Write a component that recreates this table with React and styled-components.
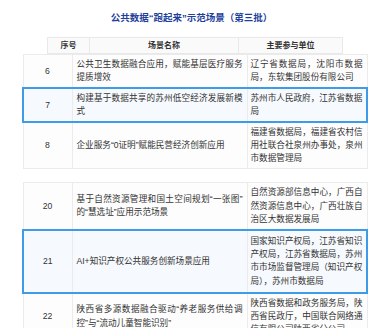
import React from 'react';
import styled, { createGlobalStyle } from 'styled-components';

const Global = createGlobalStyle`
  html, body { margin: 0; padding: 0; background: #fff; }
  body {
    font-family: "Liberation Sans", "Noto Sans CJK SC", sans-serif;
    color: #333;
  }
`;

const Page = styled.div`
  width: 386px;
  height: 328px;
  overflow: hidden;
  background: #fff;
`;

const Title = styled.h1`
  margin: 0;
  padding: 11px 3px 0 0;
  height: 26px;
  font-size: 9.5px;
  line-height: 13px;
  font-weight: 700;
  color: #1f3f9c;
  text-align: center;
`;

const HeadTable = styled.table`
  margin-left: 47px;
  width: 295px;
  border-collapse: collapse;
  table-layout: fixed;
`;

const Th = styled.th`
  height: 15px;
  padding: 0;
  border: 1px solid #e9e9e9;
  background: #fafafa;
  font-size: 8px;
  line-height: 15px;
  font-weight: 700;
  color: #333;
  text-align: center;
`;

const Table = styled.table`
  margin-left: 22px;
  margin-top: ${p => p.$gap || 0}px;
  width: 344px;
  border-collapse: collapse;
  table-layout: fixed;
`;

const Row = styled.tr`
  & > td {
    background: ${p => (p.$active ? '#f6f9fd' : '#fdfdfd')};
    ${p => p.$active && `
      border-top: 2px solid #3e9be8;
      border-bottom: 2px solid #3e9be8;
    `}
  }
  ${p => p.$active && `
    & > td:first-child { border-left: 2px solid #3e9be8; }
    & > td:last-child { border-right: 2px solid #3e9be8; }
  `}
`;

const Cell = styled.td`
  border: 1px solid #ebebeb;
  vertical-align: middle;
  font-size: 8.6px;
  line-height: 13.2px;
  padding: ${p => p.$pad ?? 3}px 4px ${p => p.$pad ?? 3}px ${p => (p.$kind === 'units' ? '3px' : '4px')};
  text-align: ${p => (p.$kind === 'no' ? 'center' : 'justify')};
  color: #333;
`;

const Line = styled.span`
  display: block;
  text-align: justify;
  text-align-last: ${p => (p.$last ? 'left' : 'justify')};
  white-space: nowrap;
`;

const Lines = ({ lines }) =>
  lines.map((l, i) => (
    <Line key={i} $last={i === lines.length - 1}>
      {l}
    </Line>
  ));

const seg1 = [
  {
    no: '6',
    name: ['公共卫生数据融合应用，赋能基层医疗服务', '提质增效'],
    units: ['辽宁省数据局，沈阳市数据', '局，东软集团股份有限公司'],
  },
  {
    no: '7',
    active: true,
    pad: 2.5,
    name: ['构建基于数据共享的苏州低空经济发展新模', '式'],
    units: ['苏州市人民政府，江苏省数据', '局'],
  },
  {
    no: '8',
    name: ['企业服务“0证明”赋能民营经济创新应用'],
    units: ['福建省数据局，福建省农村信', '用社联合社泉州办事处，泉州', '市数据管理局'],
  },
];

const seg2 = [
  {
    no: '20',
    name: ['基于自然资源管理和国土空间规划“一张图”', '的“慧选址”应用示范场景'],
    units: ['自然资源部信息中心，广西自', '然资源信息中心，广西壮族自', '治区大数据发展局'],
  },
  {
    no: '21',
    active: true,
    pad: 4,
    name: ['AI+知识产权公共服务创新场景应用'],
    units: ['国家知识产权局，江苏省知识', '产权局，江苏省数据局，苏州', '市市场监督管理局（知识产权', '局），苏州市数据局'],
  },
  {
    no: '22',
    name: ['陕西省多源数据融合驱动“养老服务供给调', '控”与“流动儿童智能识别”'],
    units: ['陕西省数据和政务服务局，陕', '西省民政厅，中国联合网络通', '信有限公司陕西省分公司'],
  },
];

const Segment = ({ rows, gap }) => (
  <Table $gap={gap}>
    <colgroup>
      <col style={{ width: 49 }} />
      <col style={{ width: 175 }} />
      <col style={{ width: 120 }} />
    </colgroup>
    <tbody>
      {rows.map(r => (
        <Row key={r.no} $active={r.active}>
          <Cell $kind="no" $pad={r.pad}>{r.no}</Cell>
          <Cell $kind="name" $pad={r.pad}>
            <Lines lines={r.name} />
          </Cell>
          <Cell $kind="units" $pad={r.pad}>
            <Lines lines={r.units} />
          </Cell>
        </Row>
      ))}
    </tbody>
  </Table>
);

export default function App() {
  return (
    <Page>
      <Global />
      <Title>公共数据“跑起来”示范场景（第三批）</Title>
      <HeadTable>
        <colgroup>
          <col style={{ width: 42 }} />
          <col style={{ width: 149 }} />
          <col style={{ width: 104 }} />
        </colgroup>
        <thead>
          <tr>
            <Th>序号</Th>
            <Th>场景名称</Th>
            <Th>主要参与单位</Th>
          </tr>
        </thead>
      </HeadTable>
      <Segment rows={seg1} />
      <Segment rows={seg2} gap={13} />
    </Page>
  );
}
